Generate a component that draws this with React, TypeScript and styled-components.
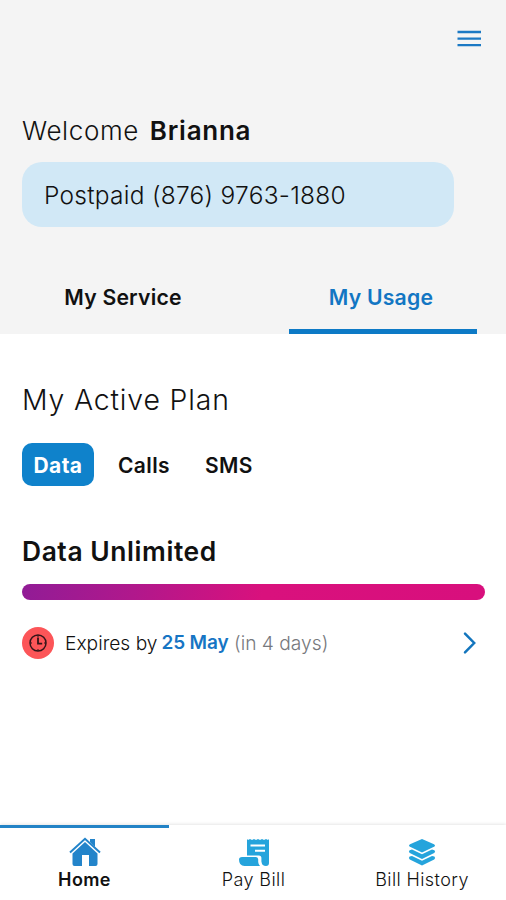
import React from "react";
import styled, { createGlobalStyle } from "styled-components";

const GlobalStyle = createGlobalStyle`
  * { box-sizing: border-box; }
  body { margin: 0; background: #fff; }
  button { border: 0; padding: 0; background: none; font: inherit; color: inherit; cursor: pointer; }
`;

const Screen = styled.div`
  display: flex;
  flex-direction: column;
  width: 506px;
  height: 900px;
  overflow: hidden;
  background: #fff;
  color: #111;
  font-family: Inter, "Liberation Sans", sans-serif;
  white-space: nowrap;
`;

const Header = styled.header`
  display: flex;
  flex-direction: column;
  height: 334px;
  background: #f4f4f4;
  > * { flex-shrink: 0; }
`;

const TopBar = styled.div`
  display: flex;
  justify-content: flex-end;
  height: 111px;
  padding: 29px 24px 0 0;
`;

const MenuButton = styled.button`
  width: 25px;
  height: 20px;
  svg { display: block; }
`;

const Welcome = styled.p`
  display: flex;
  margin: 0 0 0 22px;
  font-size: 26px;
  line-height: 40px;
  font-weight: 300;
  letter-spacing: 0.6px;
`;

const UserName = styled.strong`
  margin-left: 11px;
  font-weight: 600;
  letter-spacing: 0.75px;
`;

const AccountPill = styled.div`
  width: 432px;
  height: 65px;
  margin: 11px 0 0 22px;
  padding-left: 22px;
  border-radius: 20px;
  background: #d1e8f6;
  font-size: 24.5px;
  line-height: 67px;
  font-weight: 300;
  letter-spacing: 0.27px;
`;

const Tabs = styled.nav`
  display: flex;
  justify-content: space-between;
  height: 74px;
  margin: 33px 29px 0 29px;
`;

const Tab = styled.button<{ $active?: boolean }>`
  width: 188px;
  height: 74px;
  padding: 6px ${(p) => (p.$active ? 4 : 0)}px 0 0;
  border-bottom: 5px solid ${(p) => (p.$active ? "#0d7ac6" : "transparent")};
  color: ${(p) => (p.$active ? "#1276c3" : "#111")};
  font-size: 21.2px;
  line-height: 63px;
  font-weight: 600;
  letter-spacing: 0.2px;
`;

const Content = styled.main`
  flex: 1;
  padding: 46px 21px 0 22px;
`;

const PlanTitle = styled.h1`
  margin: 0;
  font-size: 28.4px;
  line-height: 40px;
  font-weight: 300;
  letter-spacing: 0.85px;
`;

const Chips = styled.div`
  display: flex;
  gap: 12px;
  margin-top: 23px;
`;

const Chip = styled.button<{ $active?: boolean; $width: number }>`
  width: ${(p) => p.$width}px;
  height: 43px;
  padding-top: 2px;
  border-radius: 10px;
  background: ${(p) => (p.$active ? "#0f82cb" : "transparent")};
  color: ${(p) => (p.$active ? "#fff" : "#111")};
  font-size: 21px;
  line-height: 41px;
  font-weight: ${(p) => (p.$active ? 700 : 600)};
  letter-spacing: 0.4px;
`;

const AllowanceName = styled.h2`
  margin: 45px 0 0;
  font-size: 26.4px;
  line-height: 40px;
  font-weight: 600;
  letter-spacing: 0.58px;
`;

const UsageBar = styled.div`
  height: 16px;
  margin-top: 12.5px;
  border-radius: 8px;
  background: linear-gradient(100deg, #911c96 0%, #b0188c 24%, #d9117d 52%, #d80f7d 100%);
`;

const ExpiryRow = styled.div`
  display: flex;
  align-items: center;
  height: 34px;
  margin-top: 26px;
  padding-right: 8px;
  font-size: 19.2px;
  line-height: 34px;
  font-weight: 300;
`;

const ClockBadge = styled.span`
  display: flex;
  width: 32px;
  height: 32px;
  margin-right: 11px;
  align-items: center;
  justify-content: center;
  border-radius: 50%;
  background: #fc5558;
`;

const ExpiryDate = styled.strong`
  margin-left: 4px;
  color: #1675c4;
  font-size: 19px;
  font-weight: 600;
  letter-spacing: -0.15px;
`;

const Remaining = styled.span`
  flex: 1;
  margin-left: 5.5px;
  color: #77797d;
`;

const BottomNav = styled.nav`
  display: grid;
  grid-template-columns: 169px 169px 168px;
  height: 75px;
  box-shadow: 0 -1px 3px rgba(0, 0, 0, 0.1);
`;

const NavItem = styled.button<{ $active?: boolean }>`
  display: flex;
  flex-direction: column;
  align-items: center;
  height: 75px;
  border-top: 3px solid ${(p) => (p.$active ? "#2383c6" : "transparent")};
  padding-top: 9px;
  font-size: 18px;
  line-height: 26px;
  font-weight: ${(p) => (p.$active ? 600 : 300)};
  letter-spacing: 0.4px;
  svg { display: block; }
`;

const MenuIcon = () => (
  <svg width="25" height="20" viewBox="0 0 25 20">
    <path d="M.5 3H24M.5 9.7H24M.5 16.2H24" stroke="#1b79c4" strokeWidth="2.3" />
  </svg>
);

const ClockIcon = () => (
  <svg width="20" height="20" viewBox="0 0 20 20" fill="none" stroke="#321519">
    <circle cx="10" cy="10" r="8" strokeWidth="1.5" />
    <path d="M10 4.6V10.7H14.2" strokeWidth="1.8" />
    <path d="M10 2v2M10 16v2M2 10h2M16 10h2" strokeWidth="1" />
  </svg>
);

const ChevronIcon = () => (
  <svg width="14" height="24" viewBox="0 0 14 24" fill="none">
    <path d="M2 2.6 11.2 12 2 21.4" stroke="#1375bd" strokeWidth="2.5" strokeLinecap="round" />
  </svg>
);

const HomeIcon = () => (
  <svg width="32" height="30" viewBox="0 0 32 30" fill="#2384ca">
    <path d="M21 2h5v8l-5-5Z" />
    <path d="M1 15.5 16 1.8 31 15.5" fill="none" stroke="#2384ca" strokeWidth="2" />
    <path d="M16 5 28.5 16.4V27q0 2-2 2H20V18h-7v11H5.5q-2 0-2-2V16.4Z" />
  </svg>
);

const BillIcon = () => (
  <svg width="32" height="30" viewBox="0 0 32 30" fill="#25a4dc">
    <path d="M9 2l1 1 2-1 2 1 2-1 2 1 2-1 2 1 2-1 2 1 2-1 2 1 1-1V26q0 3-3 3-4 0-4.600-4.600V21q0-2.500-2.500-2.500H9Z" />
    <path d="M4 20H18q2.200 0 2.200 2.500v2.500q.2 2.600 1.800 4H6.500Q1 29 1 22.500 1 20 4 20Z" />
    <path d="M12.500 8.600H27M17 13.800H27" stroke="#fff" strokeWidth="2" />
  </svg>
);

const LayersIcon = () => (
  <svg width="28" height="30" viewBox="0 0 28 30" fill="#25a4dc">
    <path d="M14 2 26 7.200Q28 8.500 26 9.700L14 15.500 2 9.700Q0 8.500 2 7.200Z" />
    <path d="M1.600 13.200 4 12.600 14 17.300 24 12.600 26.400 13.200Q28 14.800 26.200 16L14 22 1.800 16Q0 14.800 1.600 13.200Z" />
    <path d="M1.600 19.500 4 18.900 14 23.800 24 18.900 26.400 19.500Q28 21.200 26.200 22.400L14 28.400 1.800 22.400Q0 21.200 1.600 19.500Z" />
  </svg>
);

export default function App() {
  return (
    <Screen>
      <GlobalStyle />
      <Header>
        <TopBar>
          <MenuButton aria-label="Menu"><MenuIcon /></MenuButton>
        </TopBar>
        <Welcome>Welcome <UserName>Brianna</UserName></Welcome>
        <AccountPill>Postpaid (876) 9763-1880</AccountPill>
        <Tabs>
          <Tab>My Service</Tab>
          <Tab $active>My Usage</Tab>
        </Tabs>
      </Header>
      <Content>
        <PlanTitle>My Active Plan</PlanTitle>
        <Chips>
          <Chip $active $width={72}>Data</Chip>
          <Chip $width={76}>Calls</Chip>
          <Chip $width={70}>SMS</Chip>
        </Chips>
        <AllowanceName>Data Unlimited</AllowanceName>
        <UsageBar />
        <ExpiryRow>
          <ClockBadge><ClockIcon /></ClockBadge>
          <span>Expires by</span>
          <ExpiryDate>25 May</ExpiryDate>
          <Remaining>(in 4 days)</Remaining>
          <ChevronIcon />
        </ExpiryRow>
      </Content>
      <BottomNav>
        <NavItem $active><HomeIcon />Home</NavItem>
        <NavItem><BillIcon />Pay Bill</NavItem>
        <NavItem><LayersIcon />Bill History</NavItem>
      </BottomNav>
    </Screen>
  );
}
